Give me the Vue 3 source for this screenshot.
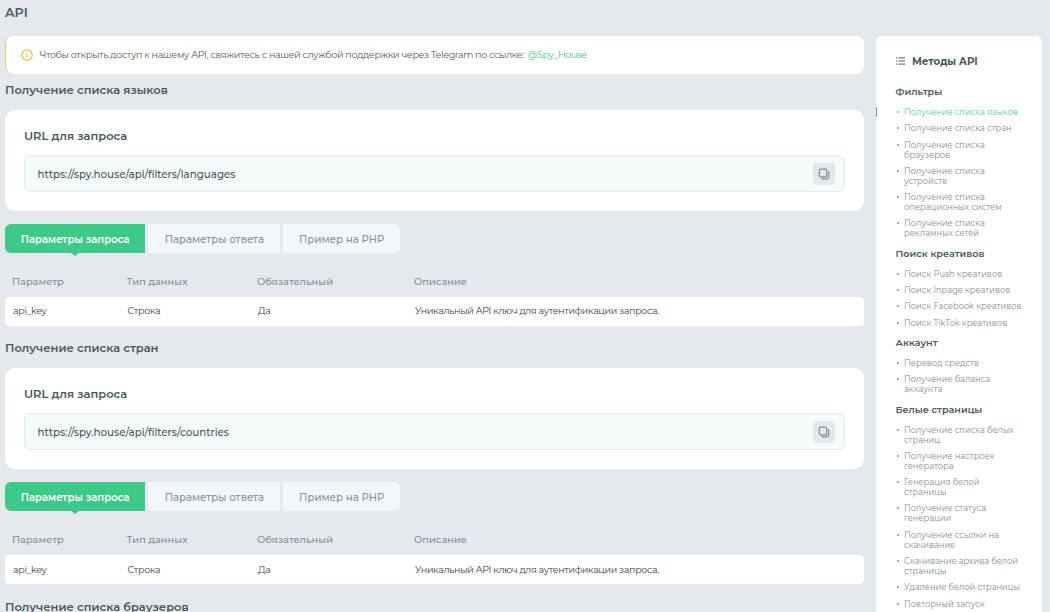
<template>
  <div class="page">
    <h1 class="page-title">API</h1>
    <div class="layout">
      <main class="content">
        <div class="notice">
          <svg class="notice-icon" viewBox="0 0 12 12" fill="none">
            <circle cx="6" cy="6" r="5.2" stroke="#e9b550" stroke-width="1.2" />
            <path d="M6 5.4v3.3M6 3.2v1.1" stroke="#e9b550" stroke-width="1.2" />
          </svg>
          <p class="notice-text">Чтобы открыть доступ к нашему API, свяжитесь с нашей службой поддержки через Telegram по ссылке:</p>
          <a class="notice-link" href="#">@Spy_House</a>
        </div>

        <section v-for="method in methods" :key="method.url" class="method">
          <h2 class="method-title">{{ method.title }}</h2>
          <div class="card">
            <h3 class="card-title">URL для запроса</h3>
            <div class="url-field">
              <span class="url-text">{{ method.url }}</span>
              <button class="copy-btn" @click="copyUrl(method.url)">
                <svg viewBox="0 0 12 12" fill="none" stroke="#858b90" stroke-width="1.2">
                  <rect x="1.3" y="1.2" width="7.4" height="7.6" rx="1.5" />
                  <path d="M10.2 3.2c.5.3.6.7.6 1.2v4.1c0 1.5-.8 2.3-2.3 2.3H4.9c-.6 0-1-.2-1.3-.7" />
                </svg>
              </button>
            </div>
          </div>
          <div class="tabs">
            <button
              v-for="(tab, index) in tabs"
              :key="tab"
              :class="['tab', 'tab-' + index, { active: method.tab === index }]"
              @click="method.tab = index"
            >{{ tab }}</button>
          </div>
          <div class="table">
            <div class="table-row table-head">
              <span v-for="column in columns" :key="column">{{ column }}</span>
            </div>
            <div class="table-row table-body">
              <span>api_key</span>
              <span>Строка</span>
              <span>Да</span>
              <span>Уникальный API ключ для аутентификации запроса.</span>
            </div>
          </div>
        </section>
        <h2 class="method-title">Получение списка браузеров</h2>
      </main>

      <aside class="sidebar">
        <div class="sidebar-title">
          <svg class="list-icon" viewBox="0 0 9 8" stroke="#4b585d" stroke-width="1">
            <path d="M2.5 .9H9M2.5 4H9M2.5 7.1H9M0 .9h1.2M0 4h1.2M0 7.1h1.2" />
          </svg>
          <span>Методы API</span>
        </div>
        <nav v-for="group in groups" :key="group.title" class="group">
          <h4 class="group-title">{{ group.title }}</h4>
          <ul class="group-list">
            <li v-for="item in group.items" :key="item" :class="{ active: item === current }">
              <a href="#" @click.prevent="current = item">{{ item }}</a>
            </li>
          </ul>
        </nav>
      </aside>
    </div>
  </div>
</template>

<script setup>
import { ref } from 'vue'

const tabs = ['Параметры запроса', 'Параметры ответа', 'Пример на PHP']
const columns = ['Параметр', 'Тип данных', 'Обязательный', 'Описание']

const methods = ref([
  { title: 'Получение списка языков', url: 'https://spy.house/api/filters/languages', tab: 0 },
  { title: 'Получение списка стран', url: 'https://spy.house/api/filters/countries', tab: 0 }
])

const current = ref('Получение списка языков')

const groups = [
  {
    title: 'Фильтры',
    items: [
      'Получение списка языков',
      'Получение списка стран',
      'Получение списка\nбраузеров',
      'Получение списка\nустройств',
      'Получение списка\nоперационных систем',
      'Получение списка\nрекламных сетей'
    ]
  },
  {
    title: 'Поиск креативов',
    items: [
      'Поиск Push креативов',
      'Поиск Inpage креативов',
      'Поиск Facebook креативов',
      'Поиск TikTok креативов'
    ]
  },
  {
    title: 'Аккаунт',
    items: ['Перевод средств', 'Получение баланса\nаккаунта']
  },
  {
    title: 'Белые страницы',
    items: [
      'Получение списка белых\nстраниц',
      'Получение настроек\nгенератора',
      'Генерация белой\nстраницы',
      'Получение статуса\nгенерации',
      'Получение ссылки на\nскачивание',
      'Скачивание архива белой\nстраницы',
      'Удаление белой страницы',
      'Повторный запуск'
    ]
  }
]

const copyUrl = (url) => {
  navigator.clipboard?.writeText(url)
}
</script>

<style>
body {
  background: #e5e9ec;
}
</style>

<style scoped>
.page {
  height: 612px;
  overflow: hidden;
  box-sizing: border-box;
  padding: 0 8px 0 5px;
  background: #e5e9ec;
  color: #4b585d;
  font-family: Montserrat, Inter, "Open Sans", sans-serif;
}

h1, h2, h3, h4, p, ul {
  margin: 0;
  padding: 0;
}

button {
  border: none;
  font-family: inherit;
  cursor: pointer;
}

a {
  color: inherit;
  text-decoration: none;
}

.page-title {
  height: 36px;
  font-size: 12.8px;
  font-weight: 600;
  line-height: 25px;
}

.layout {
  display: flex;
  align-items: flex-start;
  gap: 12px;
}

.content {
  width: 859px;
}

.notice {
  display: flex;
  align-items: center;
  height: 38px;
  box-sizing: border-box;
  padding-left: 15px;
  border-left: 1px solid #f0c56c;
  border-radius: 8px;
  background: #fff;
  font-size: 9.5px;
  letter-spacing: -0.33px;
  line-height: 12px;
  white-space: nowrap;
}

.notice-icon {
  width: 12px;
  height: 12px;
  margin-right: 6.5px;
}

.notice-text {
  padding-bottom: 1px;
  color: #535d61;
}

.notice-link {
  margin-left: 3.5px;
  padding-bottom: 1px;
  color: #3dc884;
}

.method {
  height: 258.3px;
}

.method-title {
  height: 36px;
  font-size: 11.5px;
  font-weight: 600;
  line-height: 33.5px;
}

.card {
  height: 101px;
  box-sizing: border-box;
  padding: 18px 19.5px 18px 19px;
  border-radius: 10px;
  background: #fff;
}

.card-title {
  height: 27px;
  font-size: 11.5px;
  font-weight: 600;
  line-height: 17px;
}

.url-field {
  display: flex;
  align-items: center;
  justify-content: space-between;
  height: 37px;
  box-sizing: border-box;
  padding: 0 9px 0 12.5px;
  border: 1px solid #e2ecea;
  border-radius: 6px;
  background: #f5fbfa;
}

.url-text {
  padding-top: 1px;
  font-size: 10.3px;
  font-weight: 500;
}

.copy-btn {
  display: flex;
  align-items: center;
  justify-content: center;
  width: 22px;
  height: 22px;
  padding: 0;
  border-radius: 4px;
  background: #e4e8ea;
}

.copy-btn svg {
  width: 12px;
  height: 12px;
}

.tabs {
  display: flex;
  gap: 3px;
  margin-top: 13px;
}

.tab {
  position: relative;
  width: 132px;
  height: 29px;
  padding: 1px 0 0;
  background: #f3f7f9;
  color: #8b9295;
  font-size: 10.2px;
  font-weight: 500;
  white-space: nowrap;
}

.tab-0 {
  width: 140.4px;
  border-radius: 6px 0 0 6px;
}

.tab-2 {
  width: 116.6px;
  border-radius: 0 6px 6px 0;
}

.tab.active {
  background: #3dc988;
  color: #fff;
  font-size: 10.1px;
  font-weight: 600;
}

.tab.active::after {
  content: "";
  position: absolute;
  top: 100%;
  left: 50%;
  margin-left: -4px;
  border: 4px solid transparent;
  border-top: 3px solid #3dc988;
  border-bottom: 0;
}

.table {
  margin-top: 13px;
}

.table-row {
  display: grid;
  grid-template-columns: 114.5px 130.5px 157px 1fr;
  align-items: center;
  padding-left: 7px;
  white-space: nowrap;
}

.table-head {
  height: 31px;
  box-sizing: border-box;
  padding-bottom: 1px;
  color: #858a9d;
  font-size: 9.85px;
  font-weight: 500;
  line-height: 12px;
}

.table-body {
  height: 29px;
  box-sizing: border-box;
  padding: 0 0 0.6px 8px;
  border-radius: 4px;
  background: #fff;
  font-size: 9.5px;
  letter-spacing: -0.33px;
  line-height: 12px;
  color: #3a4448;
}

.sidebar {
  width: 166px;
  height: 576px;
  box-sizing: border-box;
  padding: 18px 0 0 19.5px;
  border-radius: 6px 6px 0 0;
  background: #fff;
}

.sidebar-title {
  display: flex;
  align-items: center;
  height: 15px;
  margin-bottom: 16px;
  font-size: 10.25px;
  font-weight: 700;
}

.list-icon {
  width: 9px;
  height: 8px;
  margin: 0 7px 2px 0.5px;
}

.group {
  margin-bottom: 8.3px;
}

.group-title {
  margin-bottom: 8px;
  font-size: 9.6px;
  font-weight: 600;
  line-height: 14px;
}

.group-list {
  display: flex;
  flex-direction: column;
  gap: 6.3px;
  list-style: none;
}

.group-list li {
  position: relative;
  padding-left: 8.5px;
  color: #868d90;
  font-size: 8.3px;
  line-height: 10px;
  white-space: pre;
}

.group-list li::before {
  content: "";
  position: absolute;
  top: 4px;
  left: 1.5px;
  width: 2px;
  height: 2px;
  border-radius: 50%;
  background: currentColor;
}

.group-list li.active {
  color: #5bcb93;
}

.group-list li.active::after {
  content: "";
  position: absolute;
  top: 0;
  left: -19.5px;
  width: 1px;
  height: 10px;
  background: #3bb27c;
}
</style>
